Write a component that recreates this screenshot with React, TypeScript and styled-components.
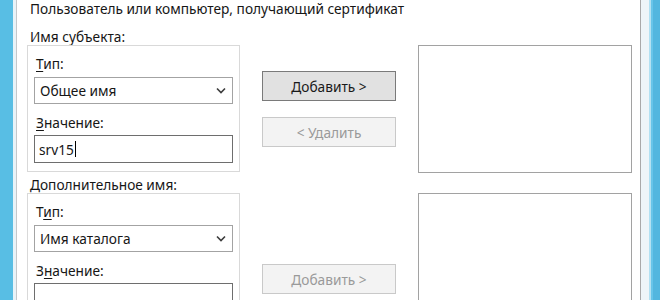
import React from 'react'
import styled, { createGlobalStyle } from 'styled-components'

const GlobalStyle = createGlobalStyle`
  html, body {
    margin: 0;
    padding: 0;
    background: #ffffff;
  }
  body {
    width: 660px;
    height: 300px;
    overflow: hidden;
    font-family: "Noto Sans", "Open Sans", Arial, sans-serif;
    font-size: 13.7px;
    color: #161616;
  }
`

const Screen = styled.div`
  display: flex;
  width: 660px;
  height: 300px;
  overflow: hidden;
`

const LeftEdge = styled.div`
  width: 17px;
  flex: none;
  box-sizing: border-box;
  border-right: 1px solid #c4c8cb;
  background: linear-gradient(to right, #58bee4 0 13px, #e8f3f8 13px 16px);
`

const RightEdge = styled.div`
  width: 20px;
  flex: none;
  box-sizing: border-box;
  border-left: 1px solid #a9a9a9;
  background: linear-gradient(
    to right,
    #eef5f8 0 8px,
    #b3e1f2 8px 10px,
    #68c4e9 10px 12px,
    #52b6df 12px
  );
`

const Dialog = styled.div`
  flex: 1;
  display: flex;
  flex-direction: column;
  padding-left: 10px;
  background: #ffffff;
`

const Title = styled.div`
  padding-left: 3px;
  line-height: 18px;
  height: 18px;
  white-space: nowrap;
`

const SectionLabel = styled.div<{ $top: number }>`
  padding-left: 3px;
  line-height: 17px;
  height: 17px;
  margin-top: ${(p) => p.$top}px;
`

const Row = styled.div`
  display: grid;
  grid-template-columns: 213px 134px 214px;
  column-gap: 22px;
  align-items: start;
`

const GroupBox = styled.div`
  box-sizing: border-box;
  border: 1px solid #d9d9d9;
  padding: 9px 6px 8px 6px;
  display: flex;
  flex-direction: column;
`

const FieldLabel = styled.div<{ $gap: number }>`
  line-height: 17px;
  height: 17px;
  padding-left: 2px;
  margin-top: ${(p) => p.$gap}px;
  u {
    text-decoration: underline;
    text-underline-offset: 2px;
  }
`

const Combo = styled.div`
  box-sizing: border-box;
  height: 27px;
  margin-top: 5px;
  border: 1px solid #a3a3a3;
  background: #ffffff;
  display: flex;
  align-items: center;
  justify-content: space-between;
  padding: 0 6px 0 5px;
`

const TextBox = styled.div`
  box-sizing: border-box;
  height: 28px;
  margin-top: 4px;
  border: 1px solid #6e6e6e;
  background: #ffffff;
  display: flex;
  align-items: center;
  padding-left: 4px;
`

const Caret = styled.span`
  display: inline-block;
  width: 1px;
  height: 16px;
  background: #000;
  margin-left: 1px;
`

const ButtonColumn = styled.div<{ $top: number }>`
  display: flex;
  flex-direction: column;
  gap: 16px;
  padding-top: ${(p) => p.$top}px;
`

const Button = styled.div<{ $disabled?: boolean }>`
  box-sizing: border-box;
  height: 30px;
  display: flex;
  align-items: center;
  justify-content: center;
  border: 1px solid ${(p) => (p.$disabled ? '#c9c9c9' : '#7a7a7a')};
  background: ${(p) => (p.$disabled ? '#f3f3f3' : '#e1e1e1')};
  color: ${(p) => (p.$disabled ? '#9a9a9a' : '#1a1a1a')};
`

const ListBox = styled.div<{ $height: number }>`
  box-sizing: border-box;
  height: ${(p) => p.$height}px;
  border: 1px solid #a2a2a2;
  background: #ffffff;
`

const Chevron = () => (
  <svg width="10" height="7" viewBox="0 0 10 7">
    <path d="M1 1.5 L5 5.5 L9 1.5" fill="none" stroke="#3c3c3c" strokeWidth="1.6" />
  </svg>
)

export default function App() {
  return (
    <Screen>
      <GlobalStyle />
      <LeftEdge />
      <Dialog>
        <Title>Пользователь или компьютер, получающий сертификат</Title>

        <SectionLabel $top={10}>Имя субъекта:</SectionLabel>
        <Row>
          <GroupBox>
            <FieldLabel $gap={0}>
              <u>Т</u>ип:
            </FieldLabel>
            <Combo>
              <span>Общее имя</span>
              <Chevron />
            </Combo>
            <FieldLabel $gap={10}>
              <u>З</u>начение:
            </FieldLabel>
            <TextBox>
              srv15
              <Caret />
            </TextBox>
          </GroupBox>
          <ButtonColumn $top={26}>
            <Button>Добавить &gt;</Button>
            <Button $disabled>&lt; Удалить</Button>
          </ButtonColumn>
          <ListBox $height={128} />
        </Row>

        <SectionLabel $top={3}>Дополнительное имя:</SectionLabel>
        <Row>
          <GroupBox>
            <FieldLabel $gap={0}>
              Т<u>и</u>п:
            </FieldLabel>
            <Combo>
              <span>Имя каталога</span>
              <Chevron />
            </Combo>
            <FieldLabel $gap={10}>
              З<u>н</u>ачение:
            </FieldLabel>
            <TextBox />
          </GroupBox>
          <ButtonColumn $top={71}>
            <Button $disabled>Добавить &gt;</Button>
          </ButtonColumn>
          <ListBox $height={128} />
        </Row>
      </Dialog>
      <RightEdge />
    </Screen>
  )
}
